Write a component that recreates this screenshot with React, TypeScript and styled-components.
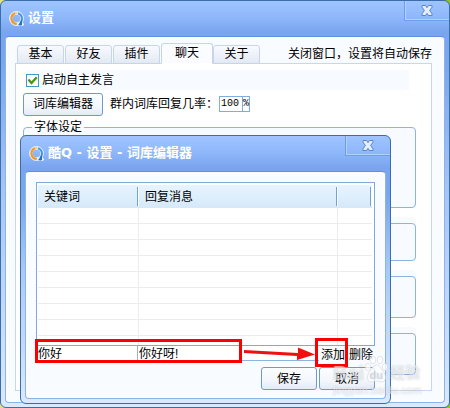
import React from "react";
import styled, { createGlobalStyle, css } from "styled-components";

const Global = createGlobalStyle`
  * { box-sizing: border-box; }
  html, body, #root { height: 100%; }
  body {
    margin: 0;
    overflow: hidden;
    background: linear-gradient(to right, #e3e27c 50%, #8fc21c 50%);
    color: #000;
    font: 12px/16px "Liberation Sans", "Noto Sans CJK SC", sans-serif;
  }
  button, input { font: inherit; color: inherit; margin: 0; }
`;

const frame = css`
  display: flex;
  flex-direction: column;
  border: 1px solid #3a6ea8;
  border-radius: 6px;
  padding: 0 4px 4px;
  background: linear-gradient(
    to bottom,
    #9fc4ff 0,
    #8fb8fb 16px,
    #79a4ee 32px,
    #7aa6ee 60px,
    #a9c8f7 50%,
    #dbe9fc 100%
  );
`;

const MainWindow = styled.main`
  ${frame}
  position: relative;
  height: 100vh;
`;

const Dialog = styled.section`
  ${frame}
  position: absolute;
  left: 19px;
  right: 58px;
  top: 134px;
  bottom: 3px;
`;

const TitleBar = styled.header`
  display: flex;
  align-items: center;
  gap: 4px;
  flex: none;
  height: 35px;
  padding: 0 4px 1px;
  color: #fff;
`;

const Title = styled.h1`
  flex: 1;
  margin: 0;
  font: bold 13px/18px "DejaVu Sans", "Noto Sans CJK SC", sans-serif;
  white-space: nowrap;
`;

const CloseButton = styled.button`
  display: flex;
  align-items: center;
  justify-content: center;
  align-self: flex-start;
  width: 45px;
  height: 20px;
  margin-right: -8px;
  padding: 0;
  border: 1px solid #6f9de6;
  border-width: 0 0 1px 1px;
  border-top-right-radius: 5px;
  background: transparent;
  box-shadow: inset 1px -1px #b4d0fb;
`;

const Client = styled.div`
  flex: 1;
  display: flex;
  flex-direction: column;
  min-height: 0;
  border: 1px solid #5f8fe0;
  border-color: #5f8fe0 #8db4ea #8db4ea;
  border-radius: 4px;
  background: #f8fbff;
  box-shadow: inset 0 0 0 3px #fbfcfe;
`;

const Logo = () => (
  <svg width="15" height="15" viewBox="0 0 15 15" fill="none" aria-hidden="true">
    <circle cx="7.5" cy="7.5" r="5.6" stroke="#e3eeff" strokeWidth="3.6" />
    <path d="M11 11l3.400 3.400" stroke="#e3eeff" strokeWidth="3" />
    <path d="M7.800 12.900A5.500 5.500 0 0 1 6.200 2.200" stroke="#f39a1f" strokeWidth="2.200" />
    <path d="M6 2.200A5.500 5.500 0 0 1 8.300 2" stroke="#f9c56a" strokeWidth="1.600" />
    <path d="M9 2.200A5.500 5.500 0 0 1 11.500 11.300" stroke="#4a9be0" strokeWidth="2" />
    <path d="M13 8.500V14H9.200l1.500-2.300z" fill="#2273be" />
  </svg>
);

const CloseIcon = () => (
  <svg width="12" height="11" viewBox="0 0 12 11" aria-hidden="true">
    <path
      d="M1 .5h3.600L6 2.700 7.400.5H11v1.700L8.600 5.500 11 8.800v1.700H7.400L6 8.300 4.600 10.500H1V8.800l2.400-3.300L1 2.200z"
      fill="#e4eeff"
      stroke="#5a84cc"
    />
  </svg>
);

const Body = styled(Client)`
  padding: 6px 12px 11px 9px;
`;

const TabBar = styled.div`
  display: flex;
  align-items: flex-end;
  height: 21px;
  margin-bottom: -1px;
  padding-left: 2px;
  flex: none;
`;

const Tab = styled.button<{ $active?: boolean }>`
  position: relative;
  width: ${(p) => (p.$active ? 52 : 47)}px;
  height: ${(p) => (p.$active ? 21 : 19)}px;
  margin-right: ${(p) => (p.$active ? 0 : 1)}px;
  padding: 0 0 1px;
  border: 1px solid #c6d5ea;
  border-bottom-color: ${(p) => (p.$active ? "#fff" : "#c6d5ea")};
  border-radius: 3px 3px 0 0;
  background: ${(p) => (p.$active ? "#fbfcff" : "linear-gradient(#f8faff, #e3e9f3)")};
  white-space: nowrap;
`;

const Notice = styled.p`
  margin: 0 0 2px auto;
  white-space: nowrap;
`;

const Page = styled.div`
  flex: 1;
  min-height: 0;
  display: flex;
  flex-direction: column;
  padding: 6px 15px 0 7px;
  border: 1px solid #c6d8ef;
  background: #fff;
`;

const CheckRow = styled.label`
  display: flex;
  align-items: center;
  gap: 3px;
  height: 20px;
  margin: 0 7px 3px 3px;
  background: #f7fbff;
`;

const Check = styled.input`
  appearance: none;
  width: 13px;
  height: 13px;
  border: 1px solid #3f9cc4;
  background: #fff
    url("data:image/svg+xml,%3Csvg xmlns='http://www.w3.org/2000/svg' viewBox='0 0 11 11'%3E%3Cpath d='M1.500 4.500l3 3.500L9.800 2.300' fill='none' stroke='%23409a18' stroke-width='2.400'/%3E%3C/svg%3E");
`;

const Row = styled.div`
  display: flex;
  align-items: center;
  height: 22px;
`;

const Button = styled.button<{ $w: number }>`
  width: ${(p) => p.$w}px;
  height: 23px;
  padding: 0;
  border: 1px solid #6d98d2;
  border-radius: 3px;
  background: linear-gradient(#fcfdff, #f3f6fc 60%, #e4ebf7);
  white-space: nowrap;
`;

const RateLabel = styled.label`
  margin: 0 0 0 7px;
  width: 109px;
  white-space: nowrap;
`;

const Rate = styled.div`
  display: flex;
  height: 16px;
  border: 1px solid #7fadde;
  font: 10px/14px "Liberation Mono", monospace;
`;

const RateInput = styled.input`
  width: 23px;
  padding: 0 0 0 1px;
  border: 0;
  border-right: 1px solid #7fadde;
  outline: 0;
`;

const Groups = styled.div`
  display: flex;
  flex-direction: column;
  gap: 15px;
  margin-top: 5px;
`;

const Group = styled.fieldset<{ $h: number }>`
  flex: none;
  height: ${(p) => p.$h}px;
  margin: 0;
  padding: 0 8px;
  border: 1px solid #8cb4de;
  border-radius: 4px;
  background: #f7fbff;
`;

const PlainGroup = styled(Group)`
  box-shadow: 0 -6px #f7fbff;
`;

const Legend = styled.legend`
  height: 14px;
  padding: 0 2px;
  line-height: 14px;
`;

const DialogBody = styled(Client)`
  padding: 10px 10px 9px;
`;

const List = styled.table`
  width: 100%;
  border: 1px solid #7fabdc;
  border-collapse: separate;
  border-spacing: 0;
  table-layout: fixed;
  padding: 2px 2px 0 1px;
  background: #fff;

  th {
    position: relative;
    height: 23px;
    padding: 0 0 0 6px;
    background: linear-gradient(#e6f4ff, #d6e9f9);
    text-align: left;
    font-weight: normal;
  }
  th::after {
    content: "";
    position: absolute;
    right: 1px;
    top: 2px;
    bottom: 2px;
    border-right: 1px solid #69a5d6;
    box-shadow: 1px 0 #fff;
  }
  td {
    height: 16px;
    padding: 0;
    border-right: 1px solid #ececec;
    border-bottom: 1px solid #ececec;
  }
  td:last-child { border-right: 0; }
  tr:last-child td { height: 9px; border-bottom: 0; }
`;

const EditRow = styled.div`
  display: flex;
  height: 15px;
`;

const Cell = styled.input<{ $w?: number }>`
  ${(p) => (p.$w ? `width: ${p.$w}px; flex: none;` : "flex: 1; min-width: 0;")}
  padding: 1px 0 0 1px;
  border: 1px solid #8cb4de;
  border-width: 0 0 1px 1px;
  background: #fff;
  outline: 0;
`;

const TextButton = styled.button`
  width: 28px;
  height: 17px;
  padding: 1px 0 0;
  border: 0;
  background: transparent;
  white-space: nowrap;
`;

const Actions = styled.div`
  display: flex;
  justify-content: flex-end;
  gap: 2px;
  margin-top: 6px;
`;

const Mark = styled.div<{ $x: number; $y: number; $w: number; $h: number }>`
  position: absolute;
  left: ${(p) => p.$x}px;
  top: ${(p) => p.$y}px;
  width: ${(p) => p.$w}px;
  height: ${(p) => p.$h}px;
  border: 3px solid #fb0000;
  pointer-events: none;
`;

const Arrow = styled.svg`
  position: absolute;
  left: 242px;
  top: 344px;
  pointer-events: none;
`;

const Watermark = styled.div`
  position: absolute;
  left: 332px;
  top: 354px;
  width: 92px;
  pointer-events: none;
  color: rgba(255, 255, 255, 0.5);
  text-shadow: 0 0 2px rgba(120, 130, 145, 0.4);
  white-space: nowrap;
`;

const Brand = styled.div`
  display: flex;
  align-items: flex-end;
  height: 28px;
  font: bold 20px/20px "Liberation Sans", "Noto Sans CJK SC", sans-serif;
`;

const BrandText = styled.span`
  margin-left: 1px;
  font-size: 15px;
`;

const Site = styled.div`
  font: 11px/14px "Liberation Sans", sans-serif;
`;

const Paw = () => (
  <svg width="25" height="28" viewBox="0 0 24 28" fill="#fff" fillOpacity=".75" stroke="#c5ccd5" strokeOpacity=".7" strokeWidth=".7" aria-hidden="true">
    <ellipse cx="3.500" cy="12" rx="2.700" ry="3.500" />
    <ellipse cx="8.500" cy="5" rx="2.800" ry="3.800" />
    <ellipse cx="15.500" cy="5" rx="2.800" ry="3.800" />
    <ellipse cx="20.500" cy="12" rx="2.700" ry="3.500" />
    <path d="M12 10c4 0 4 4 7 7s3 10-2 10c-2 0-3-1-5-1s-3 1-5 1c-5 0-5-7-2-10s3-7 7-7z" />
    <text x="5" y="24" fontSize="11" fontWeight="bold" fontFamily="Liberation Sans" fill="#cdd5df" stroke="none">du</text>
  </svg>
);

const tabs = ["基本", "好友", "插件", "聊天", "关于"];

const WindowTitle = ({ text }: { text: string }) => (
  <TitleBar>
    <Logo />
    <Title>{text}</Title>
    <CloseButton aria-label="关闭"><CloseIcon /></CloseButton>
  </TitleBar>
);

export default function App() {
  return (
    <>
      <Global />
      <MainWindow>
        <WindowTitle text="设置" />
        <Body>
          <TabBar role="tablist">
            {tabs.map((t) => (
              <Tab key={t} role="tab" aria-selected={t === "聊天"} $active={t === "聊天"}>{t}</Tab>
            ))}
            <Notice>关闭窗口，设置将自动保存</Notice>
          </TabBar>
          <Page>
            <CheckRow>
              <Check type="checkbox" defaultChecked />
              启动自主发言
            </CheckRow>
            <Row>
              <Button $w={80}>词库编辑器</Button>
              <RateLabel htmlFor="rate">群内词库回复几率：</RateLabel>
              <Rate><RateInput id="rate" defaultValue="100" />%</Rate>
            </Row>
            <Groups>
              <Group $h={88}><Legend>字体设定</Legend></Group>
              <PlainGroup $h={38} />
              <PlainGroup $h={42} />
              <PlainGroup $h={42} />
            </Groups>
          </Page>
        </Body>
        <Dialog role="dialog" aria-label="词库编辑器">
          <WindowTitle text="酷Q - 设置 - 词库编辑器" />
          <DialogBody>
            <List>
              <colgroup>
                <col style={{ width: 101 }} />
                <col />
                <col style={{ width: 34 }} />
              </colgroup>
              <thead>
                <tr><th>关键词</th><th>回复消息</th><th aria-label="操作" /></tr>
              </thead>
              <tbody>
                {Array.from({ length: 9 }, (_, i) => (
                  <tr key={i}><td /><td /><td /></tr>
                ))}
              </tbody>
            </List>
            <EditRow>
              <Cell $w={101} aria-label="关键词" defaultValue="你好" />
              <Cell aria-label="回复消息" defaultValue="你好呀!" />
              <TextButton>添加</TextButton>
              <TextButton>删除</TextButton>
            </EditRow>
            <Actions>
              <Button $w={56}>保存</Button>
              <Button $w={56}>取消</Button>
            </Actions>
          </DialogBody>
        </Dialog>
        <Mark $x={34} $y={338} $w={207} $h={24} />
        <Mark $x={314} $y={337} $w={33} $h={29} />
        <Arrow width="72" height="20" viewBox="0 0 72 20" fill="#f01010" aria-hidden="true">
          <path d="M1 5l54 3V2.500l17 7-18 5.500V11L1 8z" />
        </Arrow>
        <Watermark>
          <Brand>Bai<Paw /><BrandText>经验</BrandText></Brand>
          <Site>jingyan.baidu.com</Site>
        </Watermark>
      </MainWindow>
    </>
  );
}
